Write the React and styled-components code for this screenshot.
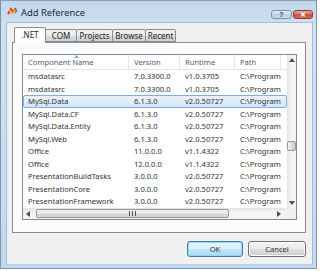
import React from 'react';
import styled, { createGlobalStyle } from 'styled-components';

const GlobalStyle = createGlobalStyle`
  html, body {
    margin: 0;
    padding: 0;
    background: #ffffff;
  }
  body {
    font-family: 'Noto Sans', 'Liberation Sans', sans-serif;
    font-size: 7.6px;
    color: #333333;
  }
`;

const references = [
  { name: 'msdatasrc', version: '7.0.3300.0', runtime: 'v1.0.3705' },
  { name: 'msdatasrc', version: '7.0.3300.0', runtime: 'v1.0.3705' },
  { name: 'MySql.Data', version: '6.1.3.0', runtime: 'v2.0.50727', selected: true },
  { name: 'MySql.Data.CF', version: '6.1.3.0', runtime: 'v2.0.50727' },
  { name: 'MySql.Data.Entity', version: '6.1.3.0', runtime: 'v2.0.50727' },
  { name: 'MySql.Web', version: '6.1.3.0', runtime: 'v2.0.50727' },
  { name: 'Office', version: '11.0.0.0', runtime: 'v1.1.4322' },
  { name: 'Office', version: '12.0.0.0', runtime: 'v1.1.4322' },
  { name: 'PresentationBuildTasks', version: '3.0.0.0', runtime: 'v2.0.50727' },
  { name: 'PresentationCore', version: '3.0.0.0', runtime: 'v2.0.50727' },
  { name: 'PresentationFramework', version: '3.0.0.0', runtime: 'v2.0.50727' },
];

const tabs = [
  { label: '.NET', width: 32 },
  { label: 'COM', width: 32 },
  { label: 'Projects', width: 37 },
  { label: 'Browse', width: 34 },
  { label: 'Recent', width: 31 },
];

const COLUMNS = '106px 51px 55px 46px';

const StyledWindow = styled.div`
  width: 317px;
  height: 269px;
  box-sizing: border-box;
  border: 1px solid #7f93ab;
  border-top-color: #8aa0ba;
  background: linear-gradient(#c3d6ec, #d2e1f2 30px, #c4d8ee);
  display: flex;
  flex-direction: column;
  padding: 0 3px 3px 5px;
`;

const StyledTitleBar = styled.div`
  height: 21px;
  display: flex;
  align-items: center;
  padding-left: 1px;
  gap: 3px;
`;

const StyledTitle = styled.span`
  font-size: 9.4px;
  color: #1e2b3c;
  flex: 1;
  padding-top: 1px;
`;

const StyledCaptionGroup = styled.div`
  display: flex;
  gap: 1px;
  margin-right: 0;
  margin-top: 5px;
`;

const StyledCaptionButton = styled.div`
  width: ${({ wide }) => (wide ? 20 : 21)}px;
  height: 9px;
  box-sizing: border-box;
  border: 1px solid ${({ danger }) => (danger ? '#8a3b33' : '#7b8ea6')};
  border-radius: 3px;
  background: ${({ danger }) =>
    danger
      ? 'linear-gradient(#e9a99a, #d27565 45%, #c04a38 55%, #d5735f)'
      : 'linear-gradient(#e4edf7, #ccdaea 45%, #b9cbe0 55%, #cfdded)'};
  display: flex;
  align-items: center;
  justify-content: center;
  color: ${({ danger }) => (danger ? '#ffffff' : '#2a3d55')};
  font-family: 'Liberation Sans', sans-serif;
  font-weight: bold;
  font-size: 7px;
  line-height: 1;
`;

const StyledClient = styled.div`
  flex: 1;
  background: #f0f0f0;
  border: 1px solid #a6bcd6;
  border-bottom-color: #b8cce4;
  display: flex;
  flex-direction: column;
  padding: 4px 6px 0 5px;
  box-sizing: border-box;
`;

const StyledTabStrip = styled.div`
  display: flex;
  align-items: flex-end;
  height: 15px;
  padding-left: 2px;
  position: relative;
  z-index: 1;
`;

const StyledTab = styled.div`
  width: ${({ width }) => width}px;
  height: ${({ active }) => (active ? 16 : 13)}px;
  box-sizing: border-box;
  border: 1px solid #898c95;
  border-bottom: ${({ active }) => (active ? 'none' : '1px solid #898c95')};
  margin-left: ${({ first }) => (first ? 0 : -1)}px;
  margin-bottom: ${({ active }) => (active ? -1 : 0)}px;
  padding-bottom: ${({ active }) => (active ? 2 : 0)}px;
  background: ${({ active }) =>
    active ? '#ffffff' : 'linear-gradient(#f3f3f3, #ebebeb 50%, #dddddd 51%, #cfcfcf)'};
  border-radius: 2px 2px 0 0;
  display: flex;
  align-items: center;
  justify-content: center;
  color: #222;
  font-size: 8px;
  z-index: ${({ active }) => (active ? 2 : 1)};
  position: relative;
`;

const StyledPanel = styled.div`
  height: 191px;
  box-sizing: border-box;
  border: 1px solid #898c95;
  background: #fbfbfb;
  padding: 11px 8px 12px 9px;
  display: flex;
`;

const StyledList = styled.div`
  flex: 1;
  border: 1px solid #828790;
  background: #ffffff;
  display: flex;
  flex-direction: column;
  overflow: hidden;
`;

const StyledListMain = styled.div`
  flex: 1;
  display: flex;
  min-height: 0;
`;

const StyledTable = styled.div`
  flex: 1;
  display: flex;
  flex-direction: column;
`;

const StyledHeader = styled.div`
  display: grid;
  grid-template-columns: ${COLUMNS} 1fr;
  height: 15px;
  border-bottom: 1px solid #e5e5e5;
  box-sizing: border-box;
  background: #ffffff;
`;

const StyledHeaderCell = styled.div`
  position: relative;
  display: flex;
  align-items: center;
  padding-left: 5px;
  border-right: 1px solid ${({ last }) => (last ? 'transparent' : '#e3e8ee')};
  color: #4c607a;
  white-space: nowrap;
  overflow: hidden;
`;

const StyledSortArrow = styled.svg`
  position: absolute;
  top: 0;
  left: 51px;
`;

const StyledRow = styled.div`
  display: grid;
  grid-template-columns: ${COLUMNS};
  height: 12.5px;
  box-sizing: border-box;
  border: 1px solid ${({ selected }) => (selected ? '#84acdd' : 'transparent')};
  border-radius: 2px;
  background: ${({ selected }) =>
    selected ? 'linear-gradient(#eaf2fc, #d5e6fa)' : 'transparent'};
  align-items: center;
`;

const StyledCell = styled.div`
  padding-left: 4px;
  white-space: nowrap;
  overflow: hidden;
  color: #333;
  line-height: 10px;
`;

const StyledVScroll = styled.div`
  width: 11px;
  background: linear-gradient(90deg, #e3e3e3, #f4f4f4 40%, #f4f4f4);
  display: flex;
  flex-direction: column;
  align-items: center;
  justify-content: space-between;
  padding: 3px 0 3px;
  box-sizing: border-box;
`;

const StyledVThumb = styled.div`
  width: 9px;
  height: 10px;
  box-sizing: border-box;
  border: 1px solid #979797;
  border-radius: 2px;
  background: linear-gradient(90deg, #f4f4f4, #e2e2e2 50%, #cfcfcf 51%, #d8d8d8);
  margin-top: 79px;
`;

const StyledSpacer = styled.div`
  flex: 1;
`;

const StyledHScrollRow = styled.div`
  display: flex;
  height: 11px;
`;

const StyledHScroll = styled.div`
  flex: 1;
  display: flex;
  align-items: center;
  background: linear-gradient(#e3e3e3, #f4f4f4 40%, #f4f4f4);
  padding: 0 4px 0 3px;
  box-sizing: border-box;
`;

const StyledHThumb = styled.div`
  width: 193px;
  height: 9px;
  margin-left: 6px;
  box-sizing: border-box;
  border: 1px solid #979797;
  border-radius: 2px;
  background: linear-gradient(#f4f4f4, #e5e5e5 50%, #d2d2d2 51%, #dadada);
  display: flex;
  align-items: center;
  justify-content: center;
`;

const StyledCorner = styled.div`
  width: 11px;
  background: #f0f0f0;
`;

const StyledButtonRow = styled.div`
  display: flex;
  justify-content: flex-end;
  gap: 5px;
  padding-top: 8px;
`;

const StyledButton = styled.div`
  width: ${({ wide }) => (wide ? 58 : 56)}px;
  height: 16px;
  box-sizing: border-box;
  border: 1px solid ${({ primary }) => (primary ? '#3c7fb1' : '#707070')};
  border-radius: 3px;
  background: ${({ primary }) =>
    primary
      ? 'linear-gradient(#eaf6fd, #d9f0fc 50%, #bee6fd 51%, #a7d9f5)'
      : 'linear-gradient(#f2f2f2, #ebebeb 50%, #dddddd 51%, #cfcfcf)'};
  box-shadow: inset 0 0 0 1px ${({ primary }) => (primary ? '#9cd6f4' : '#fcfcfc')};
  display: flex;
  align-items: center;
  justify-content: center;
  color: #333;
`;

const AppIcon = () => (
  <svg width="11" height="9" viewBox="0 0 11 9">
    <path d="M1 7 L4 2 L6 5 L9 1" fill="none" stroke="#d43a2a" strokeWidth="2" />
    <path d="M2 2 L5 7 L8 3" fill="none" stroke="#f1b929" strokeWidth="1.6" />
    <path d="M8 6 L10 3" fill="none" stroke="#4a7bc8" strokeWidth="1.4" />
  </svg>
);

const Arrow = ({ dir }) => {
  const shapes = {
    up: '0,4 3,0 6,4',
    down: '0,0 6,0 3,4',
    left: '4,0 4,6 0,3',
    right: '0,0 4,3 0,6',
  };
  const horizontal = dir === 'left' || dir === 'right';
  return (
    <svg width={horizontal ? 4 : 6} height={horizontal ? 6 : 4} viewBox={horizontal ? '0 0 4 6' : '0 0 6 4'}>
      <polygon points={shapes[dir]} fill="#4d4d4d" />
    </svg>
  );
};

const Grip = () => (
  <svg width="7" height="5" viewBox="0 0 7 5">
    <rect x="0" y="0" width="1" height="5" fill="#555" />
    <rect x="3" y="0" width="1" height="5" fill="#555" />
    <rect x="6" y="0" width="1" height="5" fill="#555" />
  </svg>
);

const App = () => {
  return (
    <>
      <GlobalStyle />
      <StyledWindow>
        <StyledTitleBar>
          <AppIcon />
          <StyledTitle>Add Reference</StyledTitle>
          <StyledCaptionGroup>
            <StyledCaptionButton>?</StyledCaptionButton>
            <StyledCaptionButton danger wide>
              ✕
            </StyledCaptionButton>
          </StyledCaptionGroup>
        </StyledTitleBar>
        <StyledClient>
          <StyledTabStrip>
            {tabs.map((tab, i) => (
              <StyledTab key={tab.label} width={tab.width} active={i === 0} first={i === 0}>
                {tab.label}
              </StyledTab>
            ))}
          </StyledTabStrip>
          <StyledPanel>
            <StyledList>
              <StyledListMain>
                <StyledTable>
                  <StyledHeader>
                    <StyledHeaderCell>
                      Component Name
                      <StyledSortArrow width="5" height="3" viewBox="0 0 5 3">
                        <polygon points="0,3 2.5,0 5,3" fill="#8da4c2" />
                      </StyledSortArrow>
                    </StyledHeaderCell>
                    <StyledHeaderCell>Version</StyledHeaderCell>
                    <StyledHeaderCell>Runtime</StyledHeaderCell>
                    <StyledHeaderCell>Path</StyledHeaderCell>
                    <StyledHeaderCell last />
                  </StyledHeader>
                  {references.map((ref, i) => (
                    <StyledRow key={i} selected={ref.selected}>
                      <StyledCell>{ref.name}</StyledCell>
                      <StyledCell>{ref.version}</StyledCell>
                      <StyledCell>{ref.runtime}</StyledCell>
                      <StyledCell>C:\Program</StyledCell>
                    </StyledRow>
                  ))}
                </StyledTable>
                <StyledVScroll>
                  <Arrow dir="up" />
                  <StyledVThumb />
                  <StyledSpacer />
                  <Arrow dir="down" />
                </StyledVScroll>
              </StyledListMain>
              <StyledHScrollRow>
                <StyledHScroll>
                  <Arrow dir="left" />
                  <StyledHThumb>
                    <Grip />
                  </StyledHThumb>
                  <StyledSpacer />
                  <Arrow dir="right" />
                </StyledHScroll>
                <StyledCorner />
              </StyledHScrollRow>
            </StyledList>
          </StyledPanel>
          <StyledButtonRow>
            <StyledButton primary>OK</StyledButton>
            <StyledButton wide>Cancel</StyledButton>
          </StyledButtonRow>
        </StyledClient>
      </StyledWindow>
    </>
  );
};

export default App;
